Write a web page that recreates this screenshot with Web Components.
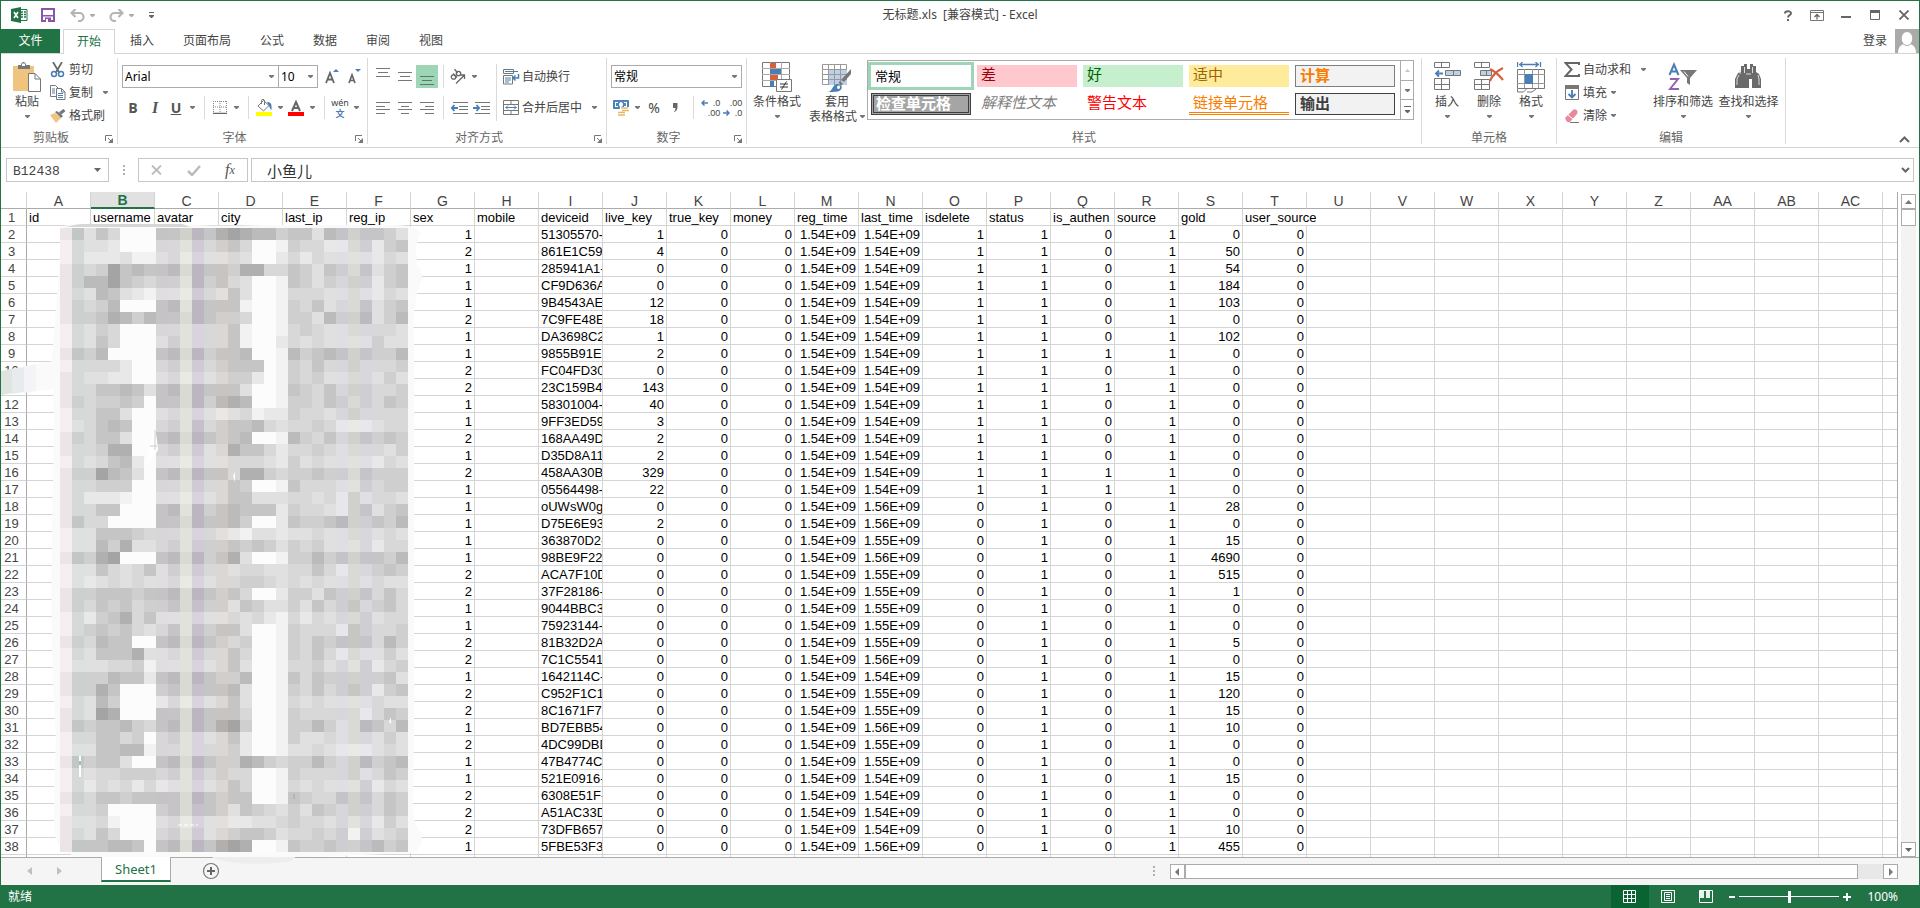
<!DOCTYPE html>
<html lang="zh-CN">
<head>
<meta charset="utf-8">
<title>无标题.xls [兼容模式] - Excel</title>
<style>
  html, body { margin: 0; height: 100%; }
  body {
    font: 12px/16px "Noto Sans", "Noto Sans CJK SC", sans-serif;
    color: #444;
    background: #fff;
    overflow: hidden;
  }
</style>
</head>
<body>
<excel-window></excel-window>

<script>
const G = "#777";
const BLUE = "#4a7fb5";

// name: [width, height, markup]
const ICONS = {
  caret: [5, 3, `<path d="M0 0h5v1L3 3H2L0 1z" fill="#777"/>`],
  caretBig: [7, 4, `<path d="M0 0h7L3.500 4z" fill="#666"/>`],
  caretUp: [7, 4, `<path d="M0 4h7L3.500 0z" fill="#777"/>`],
  caretUpOff: [5, 3, `<path d="M0 3h5L2.500 0z" fill="#c6c6c6"/>`],
  caretLine: [7, 7, `<path d="M0 0h7v1H0zM1 4h5v1L4 7H3L1 5z" fill="#666"/>`],
  customize: [5, 7, `<path d="M0 0h5v1H0zM0 3h5v1L3 6H2L0 4z" fill="#666"/>`],
  left: [4, 8, `<path d="M4 0v8L0 4z" fill="#777"/>`],
  right: [4, 8, `<path d="M0 0v8L4 4z" fill="#777"/>`],
  leftOff: [5, 8, `<path d="M5 0v8L0 4z" fill="#c0c0c0"/>`],
  rightOff: [5, 8, `<path d="M0 0v8L5 4z" fill="#c0c0c0"/>`],
  launcher: [8, 8, `<path d="M.5 6V.5H7" fill="none" stroke="#777"/><path d="M3 3l3 3" stroke="#777"/><path d="M8 3v5H3z" fill="#777"/>`],
  excel: [17, 16, `<path d="M9 2.500h7v11H9" fill="#fff" stroke="#217346"/><path d="M10 5h2M13 5h2M10 7.500h2M13 7.500h2M10 10h2M13 10h2" stroke="#217346" stroke-width="1.500"/><path d="M0 2l10-2v16L0 14z" fill="#217346"/><path d="M3 5l4 6M7 5l-4 6" stroke="#fff" stroke-width="1.600"/>`],
  save: [14, 14, `<path d="M1 1h12v12H1z" fill="#fff" stroke="#8a55a8" stroke-width="2"/><path d="M2 7h10v1.500H2zM4 9.500h6V14H4z" fill="#8a55a8"/><path d="M5 11h2v3H5z" fill="#fff"/>`],
  undo: [15, 13, `<path d="M5.500 0L1.500 4l4 4M2 4h7.500a4 4 0 0 1 0 8H8" fill="none" stroke="#b5b5b5" stroke-width="2.200"/>`],
  redo: [15, 13, `<path d="M9.500 0l4 4-4 4M13 4H5.500a4 4 0 0 0 0 8H7" fill="none" stroke="#b5b5b5" stroke-width="2.200"/>`],
  help: [8, 11, `<path d="M1 3.500C1 .5 7 .5 7 3.300 7 5.300 4 5 4 7.500" fill="none" stroke="#666" stroke-width="2"/><path d="M3 9h2v2H3z" fill="#666"/>`],
  ribbonOpts: [14, 11, `<path d="M.5.5h13v10H.5zM.5 2.500h13" fill="none" stroke="#777"/><path d="M7 9.500V5M4.500 7L7 4.500 9.500 7" fill="none" stroke="#666" stroke-width="1.300"/>`],
  min: [10, 11, `<path d="M0 6h10v2H0z" fill="#666"/>`],
  max: [10, 10, `<path d="M.5 1.500h9v8h-9z" fill="none" stroke="#666"/><path d="M0 0h10v3H0z" fill="#666"/>`],
  close: [10, 10, `<path d="M.5.5l9 9M9.500.5l-9 9" stroke="#666" stroke-width="1.800"/>`],
  avatar: [24, 24, `<path d="M0 0h24v24H0z" fill="#aaa"/><path d="M3 24c0-5 2-8 6-9h6c4 1 6 4 6 9z" fill="#fff"/><ellipse cx="12" cy="9.500" rx="5.800" ry="7" fill="#fff" stroke="#aaa"/>`],
  paste: [29, 30, `<path d="M0 4h21v25H0z" fill="#eec47e"/><path d="M5 3h3c0-4 5-4 5 0h4v4H5z" fill="#777"/><path d="M9 1.500h3V4H9z" fill="#fff"/><path d="M12.500 11.500H19l5.500 5.500v12.500h-12z" fill="#fff" stroke="#777" transform="translate(3 0)"/><path d="M22 11.500V17h5.500" fill="none" stroke="#777"/>`],
  cut: [16, 16, `<path d="M3 0l6.500 11M12 0L5.500 11" stroke="#666" stroke-width="1.700" fill="none"/><circle cx="4" cy="12" r="2.500" fill="none" stroke="${BLUE}" stroke-width="1.500"/><circle cx="11" cy="12" r="2.500" fill="none" stroke="${BLUE}" stroke-width="1.500"/>`],
  copy: [16, 15, `<path d="M.5.5h5l3 3v8h-8z" fill="#fff" stroke="#777"/><path d="M2 4h3M2 6h3M2 8h3" stroke="${BLUE}"/><path d="M6.500 3.500h5l3.500 3.500v7.500H6.500z" fill="#fff" stroke="#777"/><path d="M11.500 3.500V7H15" stroke="#777" fill="none"/><path d="M8 8.500h5M8 10.500h5M8 12.500h5" stroke="${BLUE}"/>`],
  brush: [16, 14, `<path d="M0 6l5-2 6 5-5 5z" fill="#eec47e"/><path d="M5 3l2-1 6 5-2 2z" fill="#777"/><path d="M10 4.500L14.500 1" stroke="#777" stroke-width="3"/>`],
  growA: [14, 15, `<path d="M1 14L5 4l4 10M2.500 10.500h5" fill="none" stroke="#666" stroke-width="1.800"/><path d="M8 3h6L11 0z" fill="${BLUE}"/>`],
  shrinkA: [14, 15, `<path d="M2 14L5 6l3 8M3 11.500h4" fill="none" stroke="#666" stroke-width="1.700"/><path d="M8 0h6l-3 3z" fill="${BLUE}"/>`],
  borders: [14, 13, `<path d="M.5 0v11M13.500 0v11M7 0v11M0 .5h14M0 6h14" stroke="#888" stroke-dasharray="1 1" fill="none"/><path d="M0 12.500h14" stroke="#666" stroke-width="1.500"/>`],
  fill: [17, 17, `<path d="M2 7l5.500-5.500L13 6.500 7.500 12z" fill="#fff" stroke="#777"/><path d="M5.500 5V1.500c0-1.500 3-1.500 3 0V6" fill="none" stroke="#777"/><path d="M11 3c4 0 5 2 4.500 8-2-1-2-4-3-5z" fill="${BLUE}"/><path d="M0 13h16v4H0z" fill="#ff0"/>`],
  fontA: [16, 16, `<path d="M4 11L8 2l4 9M5.500 8h5" fill="none" stroke="#666" stroke-width="2"/><path d="M0 12h16v4H0z" fill="red"/>`],
  alignTop: [14, 18, `<path d="M0 .5h14M2 4.500h10M0 8.500h14" stroke="${G}"/>`],
  alignMid: [14, 18, `<path d="M0 4.500h14M2 8.500h10M0 12.500h14" stroke="${G}"/>`],
  alignBot: [14, 18, `<path d="M0 8.500h14M2 12.500h10M0 16.500h14" stroke="#5b7a68"/>`],
  alignL: [14, 12, `<path d="M0 .5h14M0 4.500h9M0 7.500h14M0 11.500h9" stroke="${G}"/>`],
  alignC: [14, 12, `<path d="M0 .5h14M3 4.500h8M0 7.500h14M3 11.500h8" stroke="${G}"/>`],
  alignR: [14, 12, `<path d="M0 .5h14M5 4.500h9M0 7.500h14M5 11.500h9" stroke="${G}"/>`],
  orient: [16, 15, `<g fill="none" stroke="#666" stroke-width="1.300"><circle cx="3.500" cy="8" r="2.200"/><path d="M3 4.500l4 4"/><circle cx="8.500" cy="4.500" r="2.200"/><path d="M4.500 0l3 4"/><path d="M6 14.500L14 6.500M14.500 10V6H10.500"/></g>`],
  outdent: [17, 12, `<path d="M2 .5h15M8 4.500h9M8 7.500h9M2 11.500h15" stroke="${G}"/><path d="M7 6H1M3.500 3L.8 6l2.700 3" fill="none" stroke="${BLUE}" stroke-width="1.800"/>`],
  indent: [17, 12, `<path d="M2 .5h15M8 4.500h9M8 7.500h9M2 11.500h15" stroke="${G}"/><path d="M0 6h6M3.500 3l2.700 3-2.700 3" fill="none" stroke="${BLUE}" stroke-width="1.800"/>`],
  wrap: [17, 16, `<path d="M.5.5h10v4H.5zM.5 6.500h9v8.500H.5z" fill="#fff" stroke="#777"/><path d="M2 2.500h13M2 9h6M2 11h6M2 13h4" stroke="${BLUE}"/><path d="M15.500 5v4H10M12.500 6.500L10 9l2.500 2.500" fill="none" stroke="${BLUE}" stroke-width="1.500"/>`],
  merge: [16, 15, `<path d="M.5.5h15v14H.5zM.5 4.500h15M.5 10.500h15M8 .5v4M8 10.500v4" fill="none" stroke="#777"/><path d="M2.500 7.500h11M5 5.500l-2 2 2 2M11 5.500l2 2-2 2" fill="none" stroke="${BLUE}"/>`],
  currency: [17, 16, `<path d="M.5.5h15v8H.5z" fill="#4a86bd" stroke="${BLUE}"/><path d="M3 2h2v1H3v3h2v1H2V2zM11 2h3v5h-3V6h2V3h-2z" fill="#fff"/><ellipse cx="8" cy="4.500" rx="2" ry="2.500" fill="#fff"/><path d="M7 7h9v8H6z" fill="#fff"/><path d="M8 8h7M9 10.500h7M5 12.500h7M5 15h7" stroke="#e8b868" stroke-width="1.700"/>`],
  comma: [6, 9, `<path d="M0 0h4.500v4C4.500 7 3 8.500.5 9c1-1 2-2 2-4H0z" fill="#666"/>`],
  arrL: [7, 6, `<path d="M7 3H1M3.500.5L1 3l2.500 2.500" fill="none" stroke="${BLUE}" stroke-width="1.500"/>`],
  arrR: [7, 6, `<path d="M0 3h6M3.500.5L6 3 3.500 5.500" fill="none" stroke="${BLUE}" stroke-width="1.500"/>`],
  cond: [31, 30, `<path d="M.5.5h27v24H.5z" fill="#fff" stroke="#777"/><path d="M0 6.500h28M0 12.500h28M0 18.500h28M8.500 0v25M19.500 0v25" stroke="#aaa"/><path d="M8 1h6v5H8zM8 13h8v5H8z" fill="#d8603c"/><path d="M8 7h11v5H8zM8 19h4v6H8z" fill="${BLUE}"/><path d="M14.500 17.500h15v12h-15z" fill="#fff" stroke="#777"/><path d="M18 22h8M18 25h8M24.500 19.500l-5 8" stroke="#333"/>`],
  tableFmt: [30, 30, `<path d="M.5 2.500h24v20H.5z" fill="#fff" stroke="#999"/><path d="M7 8h18v15H7z" fill="#bdd0e8"/><path d="M0 7.500h25M0 12.500h25M0 17.500h25M6.500 2v21M12.500 2v21M18.500 2v21" stroke="#999"/><path d="M29 7v5L22 20l-3-2z" fill="#777"/><path d="M18 19l3 3-1.500 1.500-3-3z" fill="#777"/><path d="M6 30c5-1 4-7 9-8 4-.5 6 3 4 5.500-2 2.500-6 2.500-13 2.500z" fill="${BLUE}"/><path d="M15 26c0-3 3-3 3-1s-2 3-3 1z" fill="#fff"/>`],
  insCell: [27, 30, `<path d="M.5.5h15v5H.5zM7.500.5v5M.5 16.500h15v11H.5zM.5 22.500h15M7.500 16.500v11" fill="#fff" stroke="#777"/><path d="M11.500 8.500h15v5h-15zM19.500 8.500v5" fill="#bdd0e8" stroke="#777"/><path d="M9 11.500H2M5 8.500L2 11.500l3 3" fill="none" stroke="${BLUE}" stroke-width="1.800"/>`],
  delCell: [30, 30, `<path d="M.5.5h15v5H.5zM7.500.5v5M.5 17.500h15v10H.5zM.5 22.500h15M7.500 17.500v10" fill="#fff" stroke="#777"/><path d="M6.500 8.500h11v5h-11zM12.500 8.500v5" fill="#bdd0e8" stroke="#777"/><path d="M16 7c4 2 9 6 13 11M29 6c-6 3-11 8-13 13" fill="none" stroke="#d8603c" stroke-width="2.200"/>`],
  fmtCell: [29, 31, `<path d="M.5 0v5M23.500 0v5M2 2.500h20M5.500 0L3 2.500 5.500 5M18.500 0L21 2.500 18.500 5" fill="none" stroke="${BLUE}" stroke-width="1.300"/><path d="M.5 7.500h27v19H.5z" fill="#fff" stroke="#777"/><path d="M0 12.500h28M0 21.500h28M7.500 7v19M15.500 7v19M21.500 7v19" stroke="#999"/><path d="M8 12h8v10H8z" fill="${BLUE}"/><path d="M.5 27v3h6l3-3M10 30h5l4-3" fill="none" stroke="#777"/>`],
  sum: [16, 15, `<path d="M15 3V1H1.500l6 6.500-6 6.500H15v-2" fill="none" stroke="#666" stroke-width="2"/>`],
  fillDown: [15, 16, `<path d="M.5.5h13v14H.5z" fill="#fff" stroke="#777"/><path d="M0 0h14v4H0z" fill="#777"/><path d="M7 5v8M3.500 9L7 12.500 10.500 9" fill="none" stroke="${BLUE}" stroke-width="1.900"/>`],
  eraser: [15, 14, `<path d="M0 9l8-8c2-2 6 1 4 4l-7 8H2z" fill="#e78a9c"/><path d="M3 6l5 4" stroke="#fff"/><path d="M5 13.500h9" stroke="#777"/>`],
  sort: [30, 30, `<path d="M1.500 13L6 2.500 10.500 13M3 9.500h6" fill="none" stroke="${BLUE}" stroke-width="2"/><path d="M2 17h8L2 27h9" fill="none" stroke="#9460b4" stroke-width="2"/><path d="M12 8h17l-7 8v7l-3-2v-5z" fill="#777"/><path d="M16 9.500l4 5" stroke="#fff"/>`],
  find: [27, 30, `<path d="M6 4h3v-2h3v5h3V2h3v2h3v6l3 2 2 5v9h-9v-9h-3v9H0v-9l3-6 3-1z" fill="#6a6a6a"/><path d="M5 8v4M4 13l-2 4v6M9.500 5v6M17.500 5v6M23 13l1 4v6M11 12h5" stroke="#ddd" fill="none"/>`],
  chevUp: [11, 7, `<path d="M1 6l4.500-4.500L10 6" fill="none" stroke="#666" stroke-width="2"/>`],
  chevDown: [9, 6, `<path d="M1 1l3.500 3.500L8 1" fill="none" stroke="#666" stroke-width="2"/>`],
  dots: [2, 11, `<path d="M0 0h2v2H0zM0 4h2v2H0zM0 8h2v2H0z" fill="#b0b0b0"/>`],
  cancel: [11, 10, `<path d="M1 .5l9 9M10 .5l-9 9" stroke="#bbb" stroke-width="1.800"/>`],
  ok: [14, 11, `<path d="M1 6l4 4L13 1" fill="none" stroke="#bbb" stroke-width="2.500"/>`],
  plus: [18, 18, `<circle cx="9" cy="9" r="7.500" fill="none" stroke="#777" stroke-width="1.200"/><path d="M5 9h8M9 5v8" stroke="#666" stroke-width="2"/>`],
  vNormal: [14, 13, `<path d="M.5.5h12v12H.5zM4.500 0v13M8.500 0v13M0 4.500h13M0 8.500h13" fill="none" stroke="#fff"/>`],
  vLayout: [14, 13, `<path d="M.5.5h13v12H.5z" fill="none" stroke="#fff"/><path d="M3.500 2.500h7v8h-7zM5 4.500h4M5 6.500h4M5 8.500h4" fill="none" stroke="#fff"/>`],
  vBreak: [14, 13, `<path d="M.5.5h13v12H.5z" fill="none" stroke="#fff"/><path d="M1 1h4v7H1zM7 1h4v7H7z" fill="#e9f1ec"/>`],
  minus: [6, 2, `<path d="M0 0h6v2H0z" fill="#fff"/>`],
  add: [8, 8, `<path d="M0 3h8v2H0zM3 0h2v8H3z" fill="#fff"/>`]
};

function icon(name) {
  const [w, h, body] = ICONS[name];
  return `<svg width="${w}" height="${h}" viewBox="0 0 ${w} ${h}" aria-hidden="true">${body}</svg>`;
}

const RESET = `
  button, select, input { font: inherit; color: inherit; margin: 0; border-radius: 0; box-sizing: border-box; }
  button { padding: 0; border: 0; background: none; display: flex; align-items: center; justify-content: center; }
  svg { display: block; flex: none; }
`;

class Base extends HTMLElement {
  constructor() {
    super();
    this.attachShadow({ mode: "open" });
  }
  connectedCallback() {
    this.shadowRoot.innerHTML = `<style>${RESET}${this.css()}</style>${this.html()}`;
  }
}

// Square button holding one icon or glyph, with an optional drop-down arrow
class IconButton extends Base {
  css() {
    return `
      :host { display: flex; flex: none; }
      button { height: 23px; }
      .main { width: ${this.hasAttribute("caret") ? 20 : 22}px; }
      .drop { width: 12px; }
      :host([active]) .main { background: #9fd5b7; }`;
  }
  html() {
    const name = this.getAttribute("icon");
    const label = this.getAttribute("label");
    return `<button class="main" aria-label="${label}">${name ? icon(name) : ""}<slot></slot></button>` +
      (this.hasAttribute("caret") ? `<button class="drop" aria-label="${label}选项">${icon("caret")}</button>` : "");
  }
}
customElements.define("icon-button", IconButton);

// Icon followed by a text label on one line
class TextButton extends Base {
  css() {
    return `
      :host { display: flex; }
      button { height: 23px; gap: 3px; white-space: nowrap; }
      .icon { width: 16px; display: flex; justify-content: center; }
      .drop { width: 12px; display: flex; justify-content: center; margin-left: -3px; }
      :host([caret="far"]) .drop { margin-left: 3px; }`;
  }
  html() {
    return `<button><span class="icon">${icon(this.getAttribute("icon"))}</span><slot></slot>` +
      (this.hasAttribute("caret") ? `<span class="drop">${icon("caret")}</span>` : "") + `</button>`;
  }
}
customElements.define("text-button", TextButton);

// Large button: picture above, label below, arrow under the label
class BigButton extends Base {
  css() {
    return `
      :host { display: block; flex: none; width: 60px; padding-top: 4px; }
      button { flex-direction: column; width: 100%; line-height: 15px; white-space: nowrap; }
      .pic { height: 30px; margin-bottom: 2px; }
      .second { display: flex; align-items: center; gap: 3px; height: 15px; }`;
  }
  html() {
    return `<button><span class="pic">${icon(this.getAttribute("icon"))}</span><slot></slot>
      <span class="second"><slot name="second"></slot>${icon("caret")}</span></button>`;
  }
}
customElements.define("big-button", BigButton);

class ComboBox extends Base {
  css() {
    return `
      :host { display: grid; flex: none; height: 23px; }
      select { grid-area: 1 / 1; appearance: none; width: 100%; padding: 0 2px; color: #000;
        border: 1px solid #ababab; background: #fff; }
      svg { grid-area: 1 / 1; place-self: center end; margin-right: 5px; pointer-events: none; }`;
  }
  html() {
    return `<select aria-label="${this.getAttribute("label")}"><option>${this.getAttribute("value")}</option></select>${icon("caret")}`;
  }
}
customElements.define("combo-box", ComboBox);

class RibbonGroup extends Base {
  css() {
    return `
      :host { display: flex; flex-direction: column; flex: none; height: 86px; border-right: 1px solid #dadada; box-sizing: border-box; }
      .body { display: flex; height: 73px; }
      .foot { display: flex; height: 13px; line-height: 14px; color: #666; }
      .foot span { flex: 1; text-align: center; }
      .foot button { width: 16px; height: 12px; align-items: flex-end; padding-right: 1px; }`;
  }
  html() {
    const label = this.getAttribute("label");
    return `<div class="body"><slot></slot></div><div class="foot"><span>${label}</span>` +
      (this.hasAttribute("launcher") ? `<button aria-label="${label}设置">${icon("launcher")}</button>` : "") + `</div>`;
  }
}
customElements.define("ribbon-group", RibbonGroup);

class StyleGallery extends Base {
  css() {
    return `
      :host { display: flex; box-sizing: border-box; width: 547px; height: 60px; margin: 2px 7px 0 0; border: 1px solid #ababab; }
      .styles { flex: 1; display: grid; grid-template-columns: repeat(5, 100px); grid-auto-rows: 22px; gap: 6px; padding: 4px 3px; }
      .styles button { justify-content: flex-start; padding: 0 4px; line-height: 18px; font-size: 15px; white-space: nowrap; align-items: flex-start; }
      .styles .normal { font-size: 13px; color: #000; outline: 3px solid #9fd5b7; align-items: center; }
      .bad { background: #ffc7ce; color: #9c0006; }
      .good { background: #c6efce; color: #006100; }
      .neutral { background: #ffeb9c; color: #9c6500; }
      .calc { background: #f2f2f2; color: #fa7d00; font-weight: bold; }
      .styles .calc { border: 1px solid #7f7f7f; }
      .styles .check { background: #a5a5a5; color: #fff; font-weight: bold; border: 3px double #3f3f3f; line-height: 15px; padding: 0 2px; }
      .explain { color: #7f7f7f; font-style: italic; }
      .warn { color: red; }
      .styles .linked { color: #fa7d00; border-bottom: 3px double #ff8001; }
      .styles .output { background: #f2f2f2; color: #3f3f3f; font-weight: bold; border: 1px solid #3f3f3f; }
      .nav { width: 13px; display: grid; grid-template-rows: 20px 19px 1fr; }
      .nav button { border-left: 1px solid #ababab; border-bottom: 1px solid #ababab; }
      .nav button:last-child { border-bottom: 0; }`;
  }
  html() {
    const items = [["normal", "常规"], ["bad", "差"], ["good", "好"], ["neutral", "适中"], ["calc", "计算"],
      ["check", "检查单元格"], ["explain", "解释性文本"], ["warn", "警告文本"], ["linked", "链接单元格"], ["output", "输出"]];
    return `<div class="styles">${items.map(([c, t]) => `<button class="${c}">${t}</button>`).join("")}</div>
      <div class="nav"><button aria-label="上一行">${icon("caretUpOff")}</button><button aria-label="下一行">${icon("caret")}</button><button aria-label="更多">${icon("caretLine")}</button></div>`;
  }
}
customElements.define("style-gallery", StyleGallery);

class TitleBar extends Base {
  css() {
    return `
      :host { display: grid; grid-template-columns: 1fr auto 1fr; align-items: center; height: 28px; }
      .quick { display: flex; align-items: center; padding-left: 10px; }
      .quick button { height: 22px; }
      .quick .save { margin: 0 15px 0 13px; }
      .quick .drop { width: 14px; opacity: .6; }
      .quick .redo { margin-left: 10px; }
      .quick .more { margin-left: 6px; width: 14px; }
      .win { display: flex; justify-content: flex-end; padding-right: 1px; }
      .win button { width: 29px; height: 24px; }
      h1 { margin: 0; font: inherit; white-space: pre; }`;
  }
  html() {
    return `
      <div class="quick">${icon("excel")}
        <button class="save" aria-label="保存">${icon("save")}</button>
        <button aria-label="撤消">${icon("undo")}</button><button class="drop" aria-label="撤消列表">${icon("caret")}</button>
        <button class="redo" aria-label="恢复">${icon("redo")}</button><button class="drop" aria-label="恢复列表">${icon("caret")}</button>
        <button class="more" aria-label="自定义">${icon("customize")}</button>
      </div>
      <h1>无标题.xls  [兼容模式] - Excel</h1>
      <div class="win">${["help", "ribbonOpts", "min", "max", "close"].map(n => `<button aria-label="${n}">${icon(n)}</button>`).join("")}</div>`;
  }
}
customElements.define("title-bar", TitleBar);

class RibbonTabs extends Base {
  css() {
    return `
      :host { display: flex; height: 24px; gap: 1px; border-bottom: 1px solid #d4d4d4; }
      button { padding: 0 14px; height: 24px; white-space: nowrap; }
      .file { background: #217346; color: #fff; width: 59px; margin-right: 2px; }
      .on { color: #217346; background: #fff; border: 1px solid #d4d4d4; border-bottom: 0; padding: 0 13px; height: 25px; }
      .sign { margin-left: auto; padding: 0 7px; line-height: 20px; }`;
  }
  html() {
    return `<button class="file">文件</button><button class="on">开始</button>` +
      ["插入", "页面布局", "公式", "数据", "审阅", "视图"].map(t => `<button>${t}</button>`).join("") +
      `<button class="sign">登录</button>${icon("avatar")}`;
  }
}
customElements.define("ribbon-tabs", RibbonTabs);

class RibbonBar extends Base {
  css() {
    return `
      :host { display: flex; box-sizing: border-box; height: 94px; padding-top: 4px; border-bottom: 1px solid #d4d4d4; }
      .stack { display: flex; flex-direction: column; }
      .rows { display: flex; flex-direction: column; gap: 8px; padding-top: 7px; }
      .row { display: flex; height: 23px; align-items: center; }
      .sep { width: 12px; height: 23px; flex: none; display: flex; justify-content: center; }
      .sep::before { content: ""; width: 1px; background: #dadada; }
      .tight { width: 10px; }
      .tall { width: 8px; height: 57px; margin-top: 6px; }
      .glyph { font: bold 14px/20px "Open Sans", "Noto Sans", sans-serif; color: #555; }
      .serif { font-family: "Liberation Serif", serif; font-style: italic; font-size: 16px; }
      .wen { display: flex; flex-direction: column; align-items: center; line-height: 11px; font-size: 9px; }
      .wen b { color: ${BLUE}; }
      .dec { display: grid; grid-template-columns: 8px auto; align-items: center; font: 9px/10px "Liberation Sans", sans-serif; color: #444; justify-items: end; }
      .pct { font-size: 14px; }
      .clip { width: 46px; margin-left: 3px; }
      .clipboard { width: 67px; }
      .font { width: 249px; box-sizing: border-box; }
      .pad { padding-left: 4px; }
      .family { width: 157px; }
      .size { width: 40px; margin: 0 3px 0 -1px; }
      .format { width: 131px; margin-right: 4px; }
      .wraps { padding: 7px 6px 0 3px; width: 97px; }
      .cells { width: 42px; }
      .first { margin-left: 4px; }
      .last { margin-right: 4px; }
      .edit { padding-left: 7px; width: 86px; }
      .sort { width: 66px; }
      .find { width: 65px; margin-right: 4px; }
      .end { margin: 0 9px 0 auto; display: flex; align-items: flex-end; padding-bottom: 4px; }`;
  }
  html() {
    return `
      <ribbon-group label="剪贴板" launcher>
        <big-button class="clip" icon="paste">粘贴</big-button>
        <div class="stack clipboard">
          <text-button icon="cut">剪切</text-button>
          <text-button icon="copy" caret="far">复制</text-button>
          <text-button icon="brush">格式刷</text-button>
        </div>
      </ribbon-group>
      <ribbon-group label="字体" launcher>
        <div class="rows pad font">
          <div class="row">
            <combo-box class="family" label="字体" value="Arial"></combo-box>
            <combo-box class="size" label="字号" value="10"></combo-box>
            <icon-button icon="growA" label="增大字号"></icon-button>
            <icon-button icon="shrinkA" label="减小字号"></icon-button>
          </div>
          <div class="row">
            <icon-button label="加粗"><span class="glyph">B</span></icon-button>
            <icon-button label="倾斜"><span class="glyph serif">I</span></icon-button>
            <icon-button label="下划线" caret><u class="glyph">U</u></icon-button>
            <span class="sep"></span>
            <icon-button icon="borders" label="边框" caret></icon-button>
            <span class="sep"></span>
            <icon-button icon="fill" label="填充颜色" caret></icon-button>
            <icon-button icon="fontA" label="字体颜色" caret></icon-button>
            <span class="sep"></span>
            <icon-button label="拼音" caret><span class="wen"><span>wén</span><b>文</b></span></icon-button>
          </div>
        </div>
      </ribbon-group>
      <ribbon-group label="对齐方式" launcher>
        <div class="rows pad">
          <div class="row">
            <icon-button icon="alignTop" label="顶端对齐"></icon-button>
            <icon-button icon="alignMid" label="垂直居中"></icon-button>
            <icon-button icon="alignBot" label="底端对齐" active></icon-button>
            <span class="sep tight"></span>
            <icon-button icon="orient" label="方向" caret></icon-button>
          </div>
          <div class="row">
            <icon-button icon="alignL" label="左对齐"></icon-button>
            <icon-button icon="alignC" label="居中"></icon-button>
            <icon-button icon="alignR" label="右对齐"></icon-button>
            <span class="sep tight"></span>
            <icon-button icon="outdent" label="减少缩进量"></icon-button>
            <icon-button icon="indent" label="增加缩进量"></icon-button>
          </div>
        </div>
        <span class="sep tall"></span>
        <div class="rows wraps">
          <text-button icon="wrap">自动换行</text-button>
          <text-button icon="merge" caret="far">合并后居中</text-button>
        </div>
      </ribbon-group>
      <ribbon-group label="数字" launcher>
        <div class="rows pad">
          <div class="row"><combo-box class="format" label="数字格式" value="常规"></combo-box></div>
          <div class="row">
            <icon-button icon="currency" label="会计数字格式" caret></icon-button>
            <icon-button label="百分比样式"><span class="pct">%</span></icon-button>
            <icon-button icon="comma" label="千位分隔样式"></icon-button>
            <span class="sep"></span>
            <icon-button label="增加小数位数"><span class="dec">${icon("arrL")}<span>.0</span><i></i><span>.00</span></span></icon-button>
            <icon-button label="减少小数位数"><span class="dec"><i></i><span>.00</span>${icon("arrR")}<span>.0</span></span></icon-button>
          </div>
        </div>
      </ribbon-group>
      <ribbon-group label="样式">
        <big-button icon="cond">条件格式</big-button>
        <big-button icon="tableFmt">套用<span slot="second">表格格式</span></big-button>
        <style-gallery></style-gallery>
      </ribbon-group>
      <ribbon-group label="单元格">
        <big-button class="cells first" icon="insCell">插入</big-button>
        <big-button class="cells" icon="delCell">删除</big-button>
        <big-button class="cells last" icon="fmtCell">格式</big-button>
      </ribbon-group>
      <ribbon-group label="编辑">
        <div class="stack edit">
          <text-button icon="sum" caret="far">自动求和</text-button>
          <text-button icon="fillDown" caret>填充</text-button>
          <text-button icon="eraser" caret>清除</text-button>
        </div>
        <big-button class="sort" icon="sort">排序和筛选</big-button>
        <big-button class="find" icon="find">查找和选择</big-button>
      </ribbon-group>
      <div class="end"><button aria-label="折叠功能区">${icon("chevUp")}</button></div>`;
  }
}
customElements.define("ribbon-bar", RibbonBar);

class FormulaBar extends Base {
  css() {
    return `
      :host { display: flex; box-sizing: border-box; height: 44px; padding: 10px 5px; align-items: flex-start; }
      .box { display: flex; align-items: center; box-sizing: border-box; height: 24px; border: 1px solid #c6c6c6; }
      input { border: 0; padding: 0; background: none; min-width: 0; height: 22px; outline: 0; }
      .name { width: 103px; padding: 0 7px 0 6px; }
      .name input { flex: 1; font: 13px "Liberation Mono", monospace; padding-top: 2px; }
      .dots { width: 29px; height: 24px; display: flex; align-items: center; justify-content: center; }
      .acts { width: 110px; justify-content: space-around; margin-right: 3px; }
      .fx { font: italic 16px/16px "Liberation Serif", serif; color: #555; }
      .fx small { font-size: 12px; }
      .text { flex: 1; padding: 0 3px 0 15px; }
      .text input { flex: 1; font-size: 15px; line-height: 20px; color: #333; }`;
  }
  html() {
    return `
      <div class="box name"><input aria-label="名称框" value="B12438">${icon("caretBig")}</div>
      <span class="dots">${icon("dots")}</span>
      <div class="box acts"><button aria-label="取消">${icon("cancel")}</button><button aria-label="输入">${icon("ok")}</button><button aria-label="插入函数" class="fx">f<small>x</small></button></div>
      <div class="box text"><input aria-label="编辑栏" value="小鱼儿"><button aria-label="展开编辑栏">${icon("chevDown")}</button></div>`;
  }
}
customElements.define("formula-bar", FormulaBar);

const HEAD = ["id", "username", "avatar", "city", "last_ip", "reg_ip", "sex", "mobile", "deviceid", "live_key", "true_key", "money",
  "reg_time", "last_time", "isdelete", "status", "is_authen", "source", "gold", "user_source"];

// sex, deviceid, live_key, last_time, isdelete, is_authen, gold
const ROWS = `1 51305570-4 1 4 1 0 0
2 861E1C59- 4 4 1 0 50
1 285941A1- 0 4 1 0 54
1 CF9D636A 0 4 1 0 184
1 9B4543AE 12 4 1 0 103
2 7C9FE48E 18 4 1 0 0
1 DA3698C2 1 4 1 0 102
1 9855B91E- 2 4 1 1 0
2 FC04FD30 0 4 1 0 0
2 23C159B4- 143 4 1 1 0
1 58301004-7 40 4 1 0 0
1 9FF3ED59 3 4 1 0 0
2 168AA49D 2 4 1 0 0
1 D35D8A11 2 4 1 0 0
2 458AA30B 329 4 1 1 0
1 05564498-A 22 4 1 1 0
1 oUWsW0g 0 6 0 0 28
1 D75E6E93 2 6 0 0 0
1 363870D2- 0 5 0 0 15
1 98BE9F22 0 6 0 0 4690
2 ACA7F10D 0 5 0 0 515
2 37F28186- 0 5 0 0 1
1 9044BBC3 0 5 0 0 0
1 75923144-7 0 5 0 0 0
2 81B32D2A 0 5 0 0 5
2 7C1C5541- 0 6 0 0 0
1 1642114C- 0 4 0 0 15
2 C952F1C1 0 5 0 0 120
2 8C1671F7- 0 5 0 0 15
1 BD7EBB54 0 6 0 0 10
2 4DC99DBD 0 5 0 0 0
1 47B4774C- 0 5 0 0 0
1 521E0916- 0 4 0 0 15
2 6308E51F- 0 4 0 0 0
2 A51AC33D 0 4 0 0 0
2 73DFB657 0 4 0 0 10
1 5FBE53F3 0 6 0 0 455`.split("\n").map(line => {
  const [sex, dev, live, last, del, auth, gold] = line.split(" ");
  return ["", "", "", "", "", "", sex, "", dev, live, "0", "0", "1.54E+09", `1.5${last}E+09`, del, "1", auth, "1", gold, "0"];
});

const COLS = 29;
const colName = i => (i < 26 ? "" : "A") + String.fromCharCode(65 + i % 26);

class SheetGrid extends Base {
  css() {
    return `
      :host { flex: 1; min-height: 0; display: flex; }
      .pane { flex: 1; min-width: 0; overflow: hidden; border-right: 1px solid #ababab; }
      table { table-layout: fixed; border-collapse: separate; border-spacing: 0; width: 100%; font: 13px/14px "Liberation Sans", Arial, sans-serif; color: #000; }
      .rh { width: 26px; }
      .c { width: 64px; }
      th, td { box-sizing: border-box; height: 17px; padding: 2px 2px 0; border-right: 1px solid #d4d4d4; border-bottom: 1px solid #d4d4d4; white-space: nowrap; overflow: hidden; text-align: left; font-weight: normal; }
      th { text-align: center; color: #444; padding: 2px 0 0; }
      tr th:last-child, tr td:last-child { border-right: 0; }
      tbody th { border-right-color: #ababab; padding-right: 4px; }
      thead th { border-bottom-color: #ababab; font-size: 14px; }
      thead .on { background: #e1e1e1; color: #217346; font-weight: bold; border-bottom: 2px solid #217346; line-height: 13px; }
      td.n { text-align: right; padding-right: 2px; }
      .spill { overflow: visible; border-right: 0; }
      .bar { width: 21px; display: flex; flex-direction: column; align-items: center; padding-top: 2px; }
      .track { flex: 1; width: 15px; background: #f3f3f3; }
      .thumb { height: 17px; box-sizing: border-box; border: 1px solid #ababab; background: #fff; }
      .bar button { width: 15px; height: 15px; border: 1px solid #ababab; background: #fff; }`;
  }
  html() {
    const cols = [...Array(COLS).keys()];
    const cell = (v, i) => `<td class="${/^[\d.]+(E\+09)?$/.test(v) && i !== 8 ? "n" : v === "user_source" ? "spill" : ""}">${v}</td>`;
    const row = (vals, n) => `<tr><th scope="row">${n}</th>${cols.map(i => cell(vals[i] ?? "", i)).join("")}<td></td></tr>`;
    return `
      <div class="pane"><table>
        <colgroup><col class="rh">${'<col class="c">'.repeat(COLS)}<col></colgroup>
        <thead><tr><th></th>${cols.map(i => `<th scope="col"${i === 1 ? ' class="on"' : ""}>${colName(i)}</th>`).join("")}<th></th></tr></thead>
        <tbody>${row(HEAD, 1)}${ROWS.map((r, i) => row(r, i === 9 ? "" : i + 2)).join("")}${row([], "")}</tbody>
      </table></div>
      <div class="bar"><button aria-label="向上滚动">${icon("caretUp")}</button><div class="track"><div class="thumb"></div></div><button aria-label="向下滚动">${icon("caretBig")}</button></div>`;
  }
}
customElements.define("sheet-grid", SheetGrid);

// Grey level of each 12px block, 0 darkest to 9 lightest
const BLOCKS = `73635999334231012243362343346
85667999556454359984557754743
85777688657566569975756666756
74540323325233411553463453643
74220345446243569983464544743
75623678667456369985556656756
74542999326233389984536553643
74431242335234459984462442642
85645999556555389985456655556
85635999646555389975656666466
73429999325243329982432343442
85555799546454333984535545554
75667799657565447984546655646
75533236325233369983453544554
74544349335242129984453454534
85533699656567658774556545555
86532399546354332565545777655
74533699325234329982453543434
75541199546465133575545655564
85653279667566555674656666756
74402369325233511454434453444
75544499556455349983555664544
75777899667565336665565746556
75533999326243233374556743643
73559999335233249973443244342
86633345556556786676656655656
86624166546444343464546665755
73410999325243169984424343342
86635653646455655665535755434
86765656657565544565656656566
74433343325234359974463443535
74534354435344634664635435435
85743153666566565785756554655
85434356536343369984555734554
74523399325234549984534333524
85633316656455359984535756646
86665548666565369985546564754
74442337325234429983534444436
74413999435333269984535434743
85624999757565369985656666566
75601999335233359984555557534
73433245325231049984424652352
85533549546565379984665655646
86633228556555479986656777656
73433699325234412454424542432
85655444546454559984555546534
85756575766565359985656664756
74533433335234339983455343534
85549999435334634564634544534
76658999657566776654556565746
75635999546465433465545484654
73332239325231019983443443243`.split("\n");

const LEVELS = [164, 176, 187, 197, 207, 216, 224, 232, 242, 252];
// Column tints on top of the grey, as r/g/b offsets
const TINTS = { 0: [4, -3, 0], 1: [-3, 2, 0], 10: [2, 2, -4], 11: [0, -5, 5], 12: [-2, 0, 1], 13: [3, -1, -3], 8: [1, -2, 1], 23: [-2, -2, 3], 24: [1, 1, -3], 25: [0, -1, 4] };

class MosaicPatch extends Base {
  css() {
    return `:host { position: absolute; left: 0; top: 0; pointer-events: none; }`;
  }
  html() {
    let rects = "";
    BLOCKS.forEach((line, r) => [...line].forEach((d, c) => {
      const t = d > 7 && c ? [0, 0, 0] : TINTS[c] || [0, 0, 0];
      const rgb = t.map(v => LEVELS[d] + v).join();
      rects += `<rect x="${60 + c * 12}" y="${228 + r * 12}" width="12" height="12" fill="rgb(${rgb})"/>`;
    }));
    return `<svg width="430" height="680" viewBox="1 192 430 680">
      <path d="M195 848h110l-14 13q-20 4-55 2-25-3-41-15z" fill="#ededed"/>
      <path d="M62 227q3-3 20-3h100q30 3 80 1h130q26 0 28 8l-4 14 1 18q8 8 3 20-8 18-6 60v390l-1 70q0 20 8 27 3 16-7 21l-108 4H80q-24-4-26-28 0-50 2-90-6-90-4-200l2-120-2-60z" fill="#fafafa"/>
      <path d="M66 227q6-2 16-3h100l8 3z" fill="#d6d6d6"/>
      <path d="M1 371l30-6 29-5v28l-59 7z" fill="#fafafa"/>
      <path d="M1 371l11-2v24l-11 2z" fill="#e0e4e1"/><path d="M12 369l12-2v25l-12 2z" fill="#e8ebee"/><path d="M24 367l12-3v27l-12 2z" fill="#f4f4f6"/>
      <g shape-rendering="crispEdges">${rects}</g>
      <path d="M155 428l2 12 1 10-12 18q2-20 9-40z" fill="#fff"/><path d="M155 430v20M150 446h7" stroke="#ccc"/>
      <path d="M80 756v21" stroke="#fff" stroke-width="2"/><path d="M80 761v4" stroke="#8fc3ce" stroke-width="2"/>
      <path d="M233 476l2-4v10z" fill="#fff"/><path d="M178 825h20" stroke="#fff" stroke-dasharray="4 2"/><path d="M389 722l2-5v7z" fill="#fff"/><path d="M294 794v5" stroke="#92aabc"/>
    </svg>`;
  }
}
customElements.define("mosaic-patch", MosaicPatch);

class SheetTabs extends Base {
  css() {
    return `
      :host { display: flex; box-sizing: border-box; height: 28px; background: #f5f5f5; border-top: 1px solid #ababab; align-items: flex-start; }
      .nav { display: flex; width: 100px; box-sizing: border-box; padding: 0 39px 0 26px; justify-content: space-between; height: 25px; }
      .tab { width: 70px; height: 25px; margin-top: -1px; background: #fff; color: #217346; font-size: 13px; border: solid #ababab; border-width: 0 1px; border-bottom: 2px solid #217346; }
      .new { margin: 4px 0 0 31px; }
      .scroll { display: flex; align-items: center; margin: 6px 21px 0 auto; width: calc(39% - 3px); height: 15px; }
      .dots { width: 17px; }
      .scroll button { width: 15px; height: 15px; border: 1px solid #ababab; background: #fff; flex: none; }
      .track { flex: 1; height: 15px; background: #e8e8e8; padding-right: 25px; }
      .thumb { height: 15px; box-sizing: border-box; border: 1px solid #ababab; background: #fff; }`;
  }
  html() {
    return `
      <div class="nav"><button aria-label="上一张">${icon("leftOff")}</button><button aria-label="下一张">${icon("rightOff")}</button></div>
      <button class="tab">Sheet1</button>
      <button class="new" aria-label="新工作表">${icon("plus")}</button>
      <div class="scroll"><span class="dots">${icon("dots")}</span><button aria-label="向左滚动">${icon("left")}</button>
        <div class="track"><div class="thumb"></div></div><button aria-label="向右滚动">${icon("right")}</button></div>`;
  }
}
customElements.define("sheet-tabs", SheetTabs);

class StatusBar extends Base {
  css() {
    return `
      :host { display: flex; align-items: center; height: 23px; background: #217346; color: #fff; padding: 0 21px 0 7px; }
      .state { margin-right: auto; }
      .view { width: 38px; height: 23px; }
      .on { background: #0a6332; }
      input { appearance: none; width: 100px; height: 13px; margin: 0 4px; background: linear-gradient(#fff, #fff) center / 100% 1px no-repeat; }
      input::-webkit-slider-thumb { appearance: none; width: 3px; height: 12px; background: #fff; }
      .out { margin-left: 4px; }
      .pct { margin-left: 16px; }`;
  }
  html() {
    return `<span class="state">就绪</span>
      <button class="view on" aria-label="普通">${icon("vNormal")}</button><button class="view" aria-label="页面布局">${icon("vLayout")}</button><button class="view" aria-label="分页预览">${icon("vBreak")}</button>
      <button class="out" aria-label="缩小">${icon("minus")}</button><input type="range" min="0" max="200" value="100" aria-label="显示比例"><button aria-label="放大">${icon("add")}</button>
      <span class="pct">100%</span>`;
  }
}
customElements.define("status-bar", StatusBar);

class ExcelWindow extends Base {
  css() {
    return `
      :host { display: flex; flex-direction: column; height: 100vh; box-sizing: border-box; border: 1px solid #217346; border-bottom: 0; }
      .sheet { position: relative; flex: 1; min-height: 0; display: flex; z-index: 1; }`;
  }
  html() {
    return `<title-bar></title-bar><ribbon-tabs></ribbon-tabs><ribbon-bar></ribbon-bar><formula-bar></formula-bar>
      <div class="sheet"><sheet-grid></sheet-grid><mosaic-patch></mosaic-patch></div>
      <sheet-tabs></sheet-tabs><status-bar></status-bar>`;
  }
}
customElements.define("excel-window", ExcelWindow);
</script>
</body>
</html>
